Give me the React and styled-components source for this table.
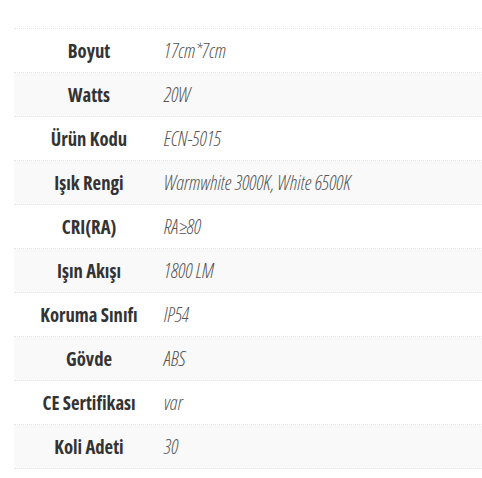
import React from 'react'
import styled, { createGlobalStyle } from 'styled-components'

const specs = [
  ['Boyut', '17cm*7cm'],
  ['Watts', '20W'],
  ['Ürün Kodu', 'ECN-5015'],
  ['Işık Rengi', 'Warmwhite 3000K, White 6500K'],
  ['CRI(RA)', 'RA≥80'],
  ['Işın Akışı', '1800 LM'],
  ['Koruma Sınıfı', 'IP54'],
  ['Gövde', 'ABS'],
  ['CE Sertifikası', 'var'],
  ['Koli Adeti', '30'],
]

const App = () => {
  return (
    <>
      <Global />
      <Table>
        {specs.map(([label, value], i) => (
          <Row key={label} striped={i % 2 === 1}>
            <Label>{label}</Label>
            <Value>{value}</Value>
          </Row>
        ))}
      </Table>
    </>
  )
}

const Global = createGlobalStyle`
body{
    margin: 0;
    background: #fff;
    font-family: "Open Sans", "DejaVu Sans", sans-serif;
}
`
const Table = styled.div`
margin: 28px 0 0 14px;
border-top: 1px dotted #e4e4e4;
`
const Row = styled.div.withConfig({ shouldForwardProp: p => p !== 'striped' })`
display: grid;
grid-template-columns: 150px 1fr;
align-items: center;
height: 43px;
border-bottom: 1px dotted #e4e4e4;
background: ${p => (p.striped ? '#f9f9f9' : '#fff')};
`
const Label = styled.div`
text-align: center;
font-weight: 700;
font-size: 18.7px;
font-stretch: 75%;
color: #333;
`
const Value = styled.div`
font-style: italic;
font-weight: 300;
font-size: 19.8px;
font-stretch: 75%;
color: #555;
`

export default App
